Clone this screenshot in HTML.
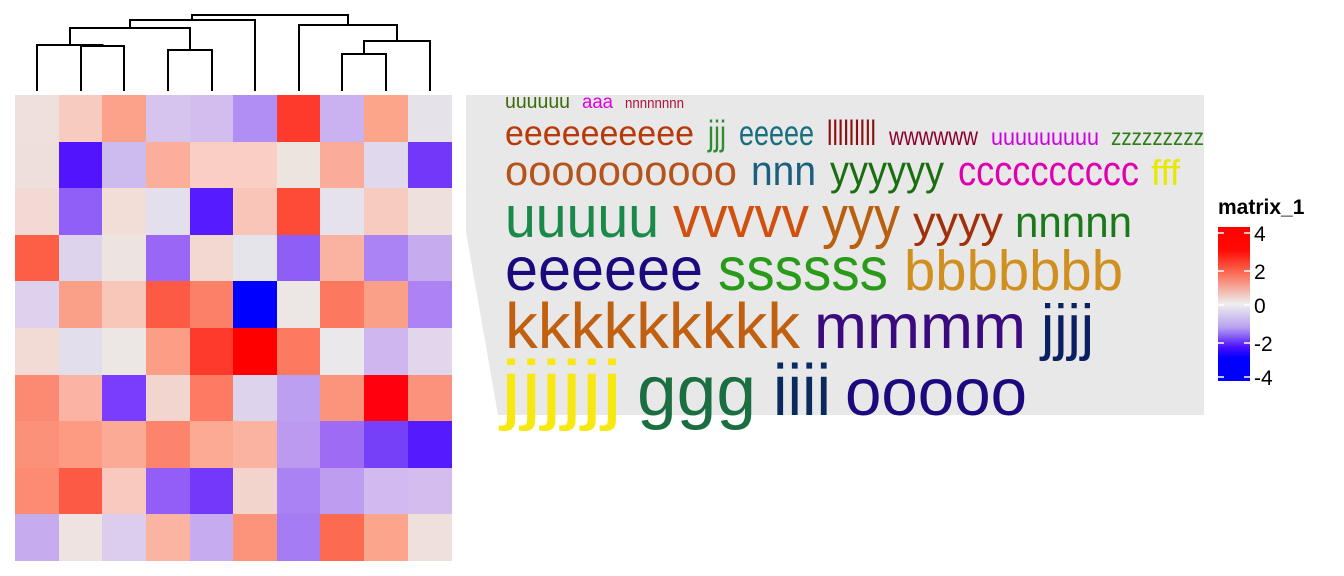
<!DOCTYPE html>
<html><head><meta charset="utf-8"><style>
html,body{margin:0;padding:0;background:#fff;}
svg{display:block;font-family:"Liberation Sans",Arial,sans-serif;}
</style></head><body>
<svg width="1344" height="576" viewBox="0 0 1344 576" xmlns="http://www.w3.org/2000/svg">
<g id="heat" shape-rendering="crispEdges"></g>
<g fill="none" stroke="#000" stroke-width="2">
<path d="M81,91V46H124V91"/>
<path d="M37,91V45H102.5V46"/>
<path d="M168,91V50H212V91"/>
<path d="M70,45V28H190V50"/>
<path d="M130,28V20H255V91"/>
<path d="M342,91V54H386V91"/>
<path d="M364,54V41H430V91"/>
<path d="M299,91V25H397V41"/>
<path d="M192,20V15H348V25"/>
</g>
<polygon points="466,95 1204,95 1204,415 498,415 466,232" fill="#e8e8e8"/>
<g>
<text x="505" y="108" font-size="20" fill="#3a6b0a" textLength="65" lengthAdjust="spacingAndGlyphs">uuuuuu</text>
<text x="582" y="108" font-size="19" fill="#e000e0" textLength="31" lengthAdjust="spacingAndGlyphs">aaa</text>
<text x="625" y="108" font-size="15" fill="#b0103a" textLength="59" lengthAdjust="spacingAndGlyphs">nnnnnnnn</text>

<text x="505" y="145" font-size="35" fill="#b83a0a" textLength="189" lengthAdjust="spacingAndGlyphs">eeeeeeeeee</text>
<text x="708" y="145" font-size="35" fill="#2e8b2e" textLength="18" lengthAdjust="spacingAndGlyphs">jjj</text>
<text x="739" y="145" font-size="35" fill="#1a6e7e" textLength="75" lengthAdjust="spacingAndGlyphs">eeeee</text>
<text x="827" y="145" font-size="35" fill="#8b1010" textLength="49" lengthAdjust="spacingAndGlyphs">lllllllll</text>
<text x="889" y="145" font-size="25" fill="#8b0030" textLength="89" lengthAdjust="spacingAndGlyphs">wwwwww</text>
<text x="991" y="145" font-size="23" fill="#cc00e0" textLength="108" lengthAdjust="spacingAndGlyphs">uuuuuuuuu</text>
<text x="1111" y="145" font-size="23" fill="#2e7d1a" textLength="93" lengthAdjust="spacingAndGlyphs">zzzzzzzzz</text>

<text x="505" y="185" font-size="42" fill="#b5531a" textLength="232" lengthAdjust="spacingAndGlyphs">oooooooooo</text>
<text x="751" y="185" font-size="42" fill="#1a607e" textLength="65" lengthAdjust="spacingAndGlyphs">nnn</text>
<text x="830" y="185" font-size="42" fill="#1a6e10" textLength="114" lengthAdjust="spacingAndGlyphs">yyyyyy</text>
<text x="958" y="185" font-size="42" fill="#e000b0" textLength="181" lengthAdjust="spacingAndGlyphs">cccccccccc</text>
<text x="1151" y="185" font-size="36" fill="#e8e800" textLength="29" lengthAdjust="spacingAndGlyphs">fff</text>

<text x="505" y="237" font-size="58" fill="#1a8a4a" textLength="154" lengthAdjust="spacingAndGlyphs">uuuuu</text>
<text x="673" y="237" font-size="58" fill="#d05010" textLength="136" lengthAdjust="spacingAndGlyphs">vvvvv</text>
<text x="822" y="237" font-size="58" fill="#b8600f" textLength="78" lengthAdjust="spacingAndGlyphs">yyy</text>
<text x="913" y="237" font-size="44" fill="#a0300a" textLength="90" lengthAdjust="spacingAndGlyphs">yyyy</text>
<text x="1015" y="237" font-size="44" fill="#1a7a1a" textLength="117" lengthAdjust="spacingAndGlyphs">nnnnn</text>

<text x="505" y="290" font-size="61" fill="#1a0a7e" textLength="198" lengthAdjust="spacingAndGlyphs">eeeeee</text>
<text x="718" y="290" font-size="61" fill="#2a9a1a" textLength="170" lengthAdjust="spacingAndGlyphs">ssssss</text>
<text x="904" y="290" font-size="57" fill="#d09020" textLength="219" lengthAdjust="spacingAndGlyphs">bbbbbbb</text>

<text x="505" y="348" font-size="64" fill="#c06010" textLength="295" lengthAdjust="spacingAndGlyphs">kkkkkkkkk</text>
<text x="814" y="348" font-size="63" fill="#3a0a7e" textLength="212" lengthAdjust="spacingAndGlyphs">mmmm</text>
<text x="1041" y="348" font-size="62" fill="#0a2060" textLength="53" lengthAdjust="spacingAndGlyphs">jjjj</text>

<text x="501" y="415" font-size="78" fill="#f8e810" textLength="121" lengthAdjust="spacingAndGlyphs">jjjjjj</text>
<text x="637" y="415" font-size="71" fill="#1a6e40" textLength="119" lengthAdjust="spacingAndGlyphs">ggg</text>
<text x="773" y="415" font-size="72" fill="#0a2a5e" textLength="58" lengthAdjust="spacingAndGlyphs">iiii</text>
<text x="845" y="415" font-size="67" fill="#1a0a7e" textLength="182" lengthAdjust="spacingAndGlyphs">ooooo</text>
</g>
<defs><linearGradient id="lg" x1="0" y1="0" x2="0" y2="1">
<stop offset="0" stop-color="#ff0000"/><stop offset="0.15" stop-color="#ff0a05"/>
<stop offset="0.3" stop-color="#fb6d55"/><stop offset="0.5" stop-color="#eeeeee"/>
<stop offset="0.65" stop-color="#b9a2f0"/><stop offset="0.78" stop-color="#4a10fd"/>
<stop offset="0.85" stop-color="#0000ff"/><stop offset="1" stop-color="#0000ff"/>
</linearGradient></defs>
<text x="1218" y="214" font-size="21" font-weight="bold" fill="#000">matrix_1</text>
<rect x="1218" y="227" width="32" height="154" fill="url(#lg)"/>
<g stroke="#fff" stroke-width="1.5">
<path d="M1218,233h6M1244,233h6M1218,271h6M1244,271h6M1218,305h6M1244,305h6M1218,343h6M1244,343h6M1218,377h6M1244,377h6"/>
</g>
<g font-size="21" fill="#000">
<text x="1254" y="241">4</text><text x="1254" y="279">2</text><text x="1254" y="313">0</text>
<text x="1254" y="351">-2</text><text x="1254" y="385">-4</text>
</g>
</svg>
<script>
var C=[
["#efe0dd","#f8cbc1","#fca28a","#d6c4ee","#d3bdef","#b18ef4","#fd3a2b","#c9b2ef","#fca58b","#e5e2ea"],
["#efdfdc","#5214fd","#cdbaef","#fbaf9b","#f8cec5","#f8cec5","#ede3df","#fbac98","#e0d8ec","#7138f9"],
["#f3d9d3","#8f5ff8","#f2ddd7","#e3dfec","#561cfd","#f9c5b8","#fd4b35","#e6e2eb","#f8cbc1","#eee0db"],
["#fd5e46","#ddd3ec","#ede3e0","#9966f6","#f3d8d2","#e6e4eb","#8f5ef6","#fbb3a1","#ac83f4","#c6acee"],
["#ddd1ee","#fba088","#f9c6ba","#fc5a44","#fc8068","#0000ff","#ece6e5","#fc785e","#fba088","#ad83f4"],
["#f2dad5","#e3deec","#ece7e5","#fc9e85","#fd3a2b","#ff0000","#fc7a60","#ebe8ec","#cfb6ef","#e2d6ed"],
["#fc8a72","#fbb4a3","#7a3dfd","#f3d5cf","#fc7b62","#ddd3ed","#bd9ff1","#fc937b","#ff000f","#fc927b"],
["#fc917a","#fc9a82","#fbab95","#fc836c","#fcaa94","#fbb3a1","#bb9af0","#9d6bf4","#7640f8","#561bfc"],
["#fc8b72","#fc5a44","#f9c8be","#925ef6","#7339fa","#f3d4cc","#ab82f4","#be9cf0","#d2b9ef","#d4bdee"],
["#c6acef","#efe3e1","#dbcdeb","#fbb4a1","#c7abf0","#fc937b","#a57cf4","#fd6a52","#fca58d","#efe0dc"]];
var xs=[15,59,102,146,190,233,277,320,364,408,452],g=document.getElementById("heat"),h="";
for(var r=0;r<10;r++){var y0=Math.round(95+r*46.6),y1=Math.round(95+(r+1)*46.6);
for(var c=0;c<10;c++){h+='<rect x="'+xs[c]+'" y="'+y0+'" width="'+(xs[c+1]-xs[c])+'" height="'+(y1-y0)+'" fill="'+C[r][c]+'"/>';}}
g.innerHTML=h;
</script>
</body></html>
